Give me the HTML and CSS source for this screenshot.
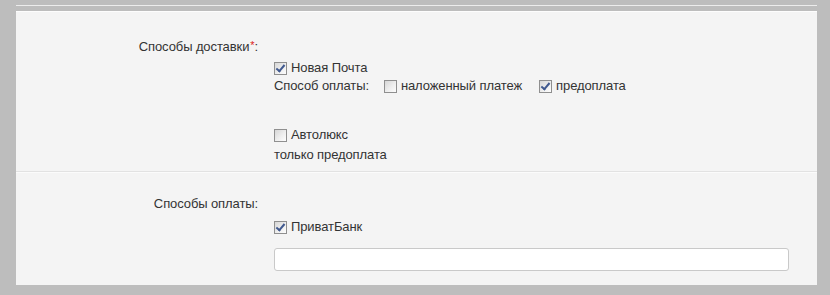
FILE: index.html
```html
<!DOCTYPE html>
<html lang="ru">
<head>
<meta charset="utf-8">
<title>Доставка и оплата</title>
<link rel="stylesheet" href="styles.css">
</head>
<body>
<div class="page">
  <div class="top-rule"></div>
  <div class="panel">
    <section class="section first">
      <div class="label">Способы доставки<span class="req">*</span>:</div>
      <div class="controls">
        <label class="line"><span class="cb checked"></span>Новая Почта</label>
        <div class="line pay">
          <span class="pay-label">Способ оплаты:</span>
          <label class="opt"><span class="cb"></span>наложенный платеж</label>
          <label class="opt"><span class="cb checked"></span>предоплата</label>
        </div>
        <label class="line gap"><span class="cb"></span>Автолюкс</label>
        <div class="line note">только предоплата</div>
      </div>
    </section>
    <section class="section second">
      <div class="label">Способы оплаты:</div>
      <div class="controls">
        <label class="line bank"><span class="cb checked"></span>ПриватБанк</label>
        <input class="field" type="text">
      </div>
    </section>
  </div>
</div>
</body>
</html>
```

FILE: styles.css
```css
html, body {
  margin: 0;
  padding: 0;
}
body {
  background: #bdbdbd;
  font-family: "Liberation Sans", Arial, sans-serif;
  font-size: 13px;
  letter-spacing: -0.1px;
  color: #333;
  width: 830px;
  height: 295px;
  overflow: hidden;
}
.page {
  padding: 5px 13px 10px 16px;
}
.top-rule {
  height: 1px;
  background: #ececec;
  margin-bottom: 5px;
}
.panel {
  background: #f4f4f4;
  border-top: 1px solid #fdfdfd;
}
.section {
  display: block;
}
.first {
  padding: 24px 0 7px;
  border-bottom: 1px solid #e2e2e2;
}
.second {
  border-top: 1px solid #fbfbfb;
  padding: 22px 0 14px;
}
.label {
  width: 242px;
  text-align: right;
  line-height: 18px;
}
.req {
  color: #d22;
  font-size: 11px;
  vertical-align: 2px;
  margin-left: 1px;
}
.controls {
  margin-left: 258px;
}
.line {
  display: flex;
  align-items: center;
  line-height: 18px;
}
.first .controls > .line:first-child {
  margin-top: 3px;
}
.pay-label {
  margin-right: 15px;
}
.opt {
  display: flex;
  align-items: center;
  margin-right: 17px;
}
.gap {
  margin-top: 31px;
}
.note {
  line-height: 19px;
  margin-top: 1px;
}
.bank {
  margin-top: 5px;
}
.cb {
  box-sizing: border-box;
  display: inline-block;
  width: 13px;
  height: 13px;
  border: 1px solid #8f8f8f;
  background: linear-gradient(135deg, #d6d6d6 0%, #eeeeee 55%, #fdfdfd 100%);
  margin-right: 4px;
  position: relative;
  flex: none;
}
.cb.checked::after {
  content: "";
  position: absolute;
  left: 3px;
  top: 0px;
  width: 3px;
  height: 7px;
  border: solid #40598f;
  border-width: 0 2px 2px 0;
  transform: rotate(40deg);
}
.field {
  display: block;
  box-sizing: border-box;
  width: 515px;
  height: 23px;
  margin: 12px 0 0;
  border: 1px solid #c9c9c9;
  border-radius: 3px;
  background: #fff;
  padding: 0 4px;
  font: inherit;
}
```
